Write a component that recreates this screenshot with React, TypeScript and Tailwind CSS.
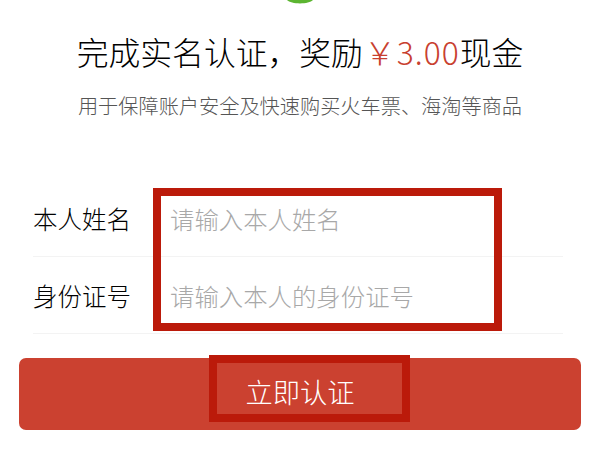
const cjk = "font-['Noto_Sans_CJK_SC','Noto_Sans',sans-serif]";

function Row({ label, hint }: { label: string; hint: string }) {
  return (
    <div className="flex h-[77px] items-center border-b border-[#f3f3f3] pt-[2px]">
      <span className="w-[137px] text-[24.5px] font-light leading-none text-[#000]">{label}</span>
      <span className="text-[24.4px] font-light leading-none text-[#a8a8a8]">{hint}</span>
    </div>
  );
}

export default function App() {
  return (
    <div className={`relative h-[450px] w-[600px] overflow-hidden bg-white ${cjk}`}>
      {/* bottom of the green icon, cut off by the crop */}
      <svg className="mx-auto block h-[4px] w-[28px]" viewBox="0 0 28 4">
        <path d="M1 0 C5 4.5 23 4.5 27 0 Z" fill="#5cb531" />
      </svg>

      <h1 className="mt-[28px] flex h-[40px] items-center justify-center text-[31.8px] font-light leading-none text-[#000]">
        完成实名认证，奖励
        <span className="ml-[1px] tracking-[1px] text-[#c8402f]">￥3.00</span>
        现金
      </h1>
      <p className="mt-[24px] text-center text-[20.2px] font-light leading-none text-[#555]">
        用于保障账户安全及快速购买火车票、海淘等商品
      </p>

      <div className="ml-[33px] mr-[37px] mt-[64px]">
        <Row label="本人姓名" hint="请输入本人姓名" />
        <Row label="身份证号" hint="请输入本人的身份证号" />
      </div>

      <button className="mx-[19px] mt-[24px] flex h-[72px] w-[562px] items-center justify-center rounded-[7px] bg-[#cb4130] pb-[5px] text-[27.3px] font-light leading-none text-white">
        立即认证
      </button>

      {/* red annotation boxes laid over the form */}
      <div className="absolute left-[153px] top-[188px] h-[143px] w-[349px] border-[8px] border-[#bb1a0a]" />
      <div className="absolute left-[209px] top-[355px] h-[67px] w-[201px] border-[8px] border-[#bb1a0a]" />
    </div>
  );
}
